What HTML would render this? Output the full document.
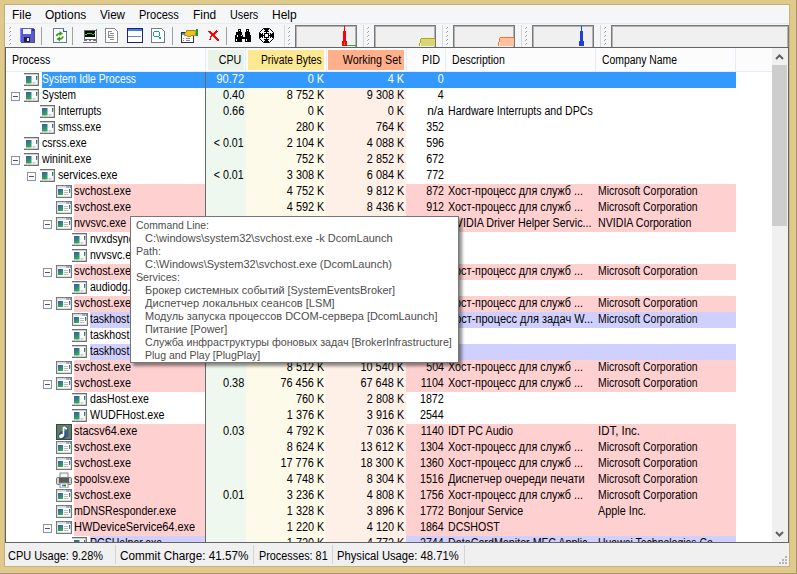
<!DOCTYPE html><html><head><meta charset="utf-8"><style>html,body{margin:0;padding:0;width:797px;height:574px;overflow:hidden;background:#dfc98b}body>div,body>svg{position:absolute}div{position:absolute}.t{white-space:pre;font-family:"Liberation Sans",sans-serif}svg{display:block}</style></head><body><div style="left:0px;top:0px;width:797px;height:574px;background:#dfc98b;"></div>
<div style="left:4px;top:4px;width:786px;height:1px;background:#c4ad76;"></div>
<div style="left:4px;top:4px;width:1px;height:563px;background:#c4ad76;"></div>
<div style="left:789px;top:4px;width:1px;height:563px;background:#c9b27a;"></div>
<div style="left:4px;top:566px;width:786px;height:1px;background:#c9b27a;"></div>
<div style="left:796px;top:0px;width:1px;height:574px;background:#a8966a;"></div>
<div style="left:0px;top:573px;width:797px;height:1px;background:#a8966a;"></div>
<div style="left:5px;top:5px;width:784px;height:18px;background:#f5f6f7;"></div>
<div class="t" style="left:12px;top:6px;font-size:12px;line-height:18px;color:#000;transform:scaleX(1.0);transform-origin:0 0;">File</div>
<div class="t" style="left:45px;top:6px;font-size:12px;line-height:18px;color:#000;transform:scaleX(1.0);transform-origin:0 0;">Options</div>
<div class="t" style="left:100px;top:6px;font-size:12px;line-height:18px;color:#000;transform:scaleX(0.97);transform-origin:0 0;">View</div>
<div class="t" style="left:139px;top:6px;font-size:12px;line-height:18px;color:#000;transform:scaleX(0.92);transform-origin:0 0;">Process</div>
<div class="t" style="left:193px;top:6px;font-size:12px;line-height:18px;color:#000;transform:scaleX(0.99);transform-origin:0 0;">Find</div>
<div class="t" style="left:230px;top:6px;font-size:12px;line-height:18px;color:#000;transform:scaleX(0.9);transform-origin:0 0;">Users</div>
<div class="t" style="left:272px;top:6px;font-size:12px;line-height:18px;color:#000;transform:scaleX(1.0);transform-origin:0 0;">Help</div>
<div style="left:5px;top:23px;width:784px;height:24px;background:#f5f6f7;"></div>
<div style="left:5px;top:23px;width:784px;height:1px;background:#e9ecef;"></div>
<div style="left:10px;top:27px;width:1px;height:1px;background:#9a9a9a;"></div>
<div style="left:9px;top:28px;width:1px;height:1px;background:#b0b0b0;"></div>
<div style="left:10px;top:31px;width:1px;height:1px;background:#9a9a9a;"></div>
<div style="left:9px;top:32px;width:1px;height:1px;background:#b0b0b0;"></div>
<div style="left:10px;top:35px;width:1px;height:1px;background:#9a9a9a;"></div>
<div style="left:9px;top:36px;width:1px;height:1px;background:#b0b0b0;"></div>
<div style="left:10px;top:39px;width:1px;height:1px;background:#9a9a9a;"></div>
<div style="left:9px;top:40px;width:1px;height:1px;background:#b0b0b0;"></div>
<div style="left:10px;top:43px;width:1px;height:1px;background:#9a9a9a;"></div>
<div style="left:9px;top:44px;width:1px;height:1px;background:#b0b0b0;"></div>
<div style="left:10px;top:47px;width:1px;height:1px;background:#9a9a9a;"></div>
<div style="left:9px;top:48px;width:1px;height:1px;background:#b0b0b0;"></div>
<div style="left:289px;top:27px;width:1px;height:1px;background:#9a9a9a;"></div>
<div style="left:288px;top:28px;width:1px;height:1px;background:#b0b0b0;"></div>
<div style="left:289px;top:31px;width:1px;height:1px;background:#9a9a9a;"></div>
<div style="left:288px;top:32px;width:1px;height:1px;background:#b0b0b0;"></div>
<div style="left:289px;top:35px;width:1px;height:1px;background:#9a9a9a;"></div>
<div style="left:288px;top:36px;width:1px;height:1px;background:#b0b0b0;"></div>
<div style="left:289px;top:39px;width:1px;height:1px;background:#9a9a9a;"></div>
<div style="left:288px;top:40px;width:1px;height:1px;background:#b0b0b0;"></div>
<div style="left:289px;top:43px;width:1px;height:1px;background:#9a9a9a;"></div>
<div style="left:288px;top:44px;width:1px;height:1px;background:#b0b0b0;"></div>
<div style="left:289px;top:47px;width:1px;height:1px;background:#9a9a9a;"></div>
<div style="left:288px;top:48px;width:1px;height:1px;background:#b0b0b0;"></div>
<div style="left:368px;top:27px;width:1px;height:1px;background:#9a9a9a;"></div>
<div style="left:367px;top:28px;width:1px;height:1px;background:#b0b0b0;"></div>
<div style="left:368px;top:31px;width:1px;height:1px;background:#9a9a9a;"></div>
<div style="left:367px;top:32px;width:1px;height:1px;background:#b0b0b0;"></div>
<div style="left:368px;top:35px;width:1px;height:1px;background:#9a9a9a;"></div>
<div style="left:367px;top:36px;width:1px;height:1px;background:#b0b0b0;"></div>
<div style="left:368px;top:39px;width:1px;height:1px;background:#9a9a9a;"></div>
<div style="left:367px;top:40px;width:1px;height:1px;background:#b0b0b0;"></div>
<div style="left:368px;top:43px;width:1px;height:1px;background:#9a9a9a;"></div>
<div style="left:367px;top:44px;width:1px;height:1px;background:#b0b0b0;"></div>
<div style="left:368px;top:47px;width:1px;height:1px;background:#9a9a9a;"></div>
<div style="left:367px;top:48px;width:1px;height:1px;background:#b0b0b0;"></div>
<div style="left:447px;top:27px;width:1px;height:1px;background:#9a9a9a;"></div>
<div style="left:446px;top:28px;width:1px;height:1px;background:#b0b0b0;"></div>
<div style="left:447px;top:31px;width:1px;height:1px;background:#9a9a9a;"></div>
<div style="left:446px;top:32px;width:1px;height:1px;background:#b0b0b0;"></div>
<div style="left:447px;top:35px;width:1px;height:1px;background:#9a9a9a;"></div>
<div style="left:446px;top:36px;width:1px;height:1px;background:#b0b0b0;"></div>
<div style="left:447px;top:39px;width:1px;height:1px;background:#9a9a9a;"></div>
<div style="left:446px;top:40px;width:1px;height:1px;background:#b0b0b0;"></div>
<div style="left:447px;top:43px;width:1px;height:1px;background:#9a9a9a;"></div>
<div style="left:446px;top:44px;width:1px;height:1px;background:#b0b0b0;"></div>
<div style="left:447px;top:47px;width:1px;height:1px;background:#9a9a9a;"></div>
<div style="left:446px;top:48px;width:1px;height:1px;background:#b0b0b0;"></div>
<div style="left:526px;top:27px;width:1px;height:1px;background:#9a9a9a;"></div>
<div style="left:525px;top:28px;width:1px;height:1px;background:#b0b0b0;"></div>
<div style="left:526px;top:31px;width:1px;height:1px;background:#9a9a9a;"></div>
<div style="left:525px;top:32px;width:1px;height:1px;background:#b0b0b0;"></div>
<div style="left:526px;top:35px;width:1px;height:1px;background:#9a9a9a;"></div>
<div style="left:525px;top:36px;width:1px;height:1px;background:#b0b0b0;"></div>
<div style="left:526px;top:39px;width:1px;height:1px;background:#9a9a9a;"></div>
<div style="left:525px;top:40px;width:1px;height:1px;background:#b0b0b0;"></div>
<div style="left:526px;top:43px;width:1px;height:1px;background:#9a9a9a;"></div>
<div style="left:525px;top:44px;width:1px;height:1px;background:#b0b0b0;"></div>
<div style="left:526px;top:47px;width:1px;height:1px;background:#9a9a9a;"></div>
<div style="left:525px;top:48px;width:1px;height:1px;background:#b0b0b0;"></div>
<div style="left:605px;top:27px;width:1px;height:1px;background:#9a9a9a;"></div>
<div style="left:604px;top:28px;width:1px;height:1px;background:#b0b0b0;"></div>
<div style="left:605px;top:31px;width:1px;height:1px;background:#9a9a9a;"></div>
<div style="left:604px;top:32px;width:1px;height:1px;background:#b0b0b0;"></div>
<div style="left:605px;top:35px;width:1px;height:1px;background:#9a9a9a;"></div>
<div style="left:604px;top:36px;width:1px;height:1px;background:#b0b0b0;"></div>
<div style="left:605px;top:39px;width:1px;height:1px;background:#9a9a9a;"></div>
<div style="left:604px;top:40px;width:1px;height:1px;background:#b0b0b0;"></div>
<div style="left:605px;top:43px;width:1px;height:1px;background:#9a9a9a;"></div>
<div style="left:604px;top:44px;width:1px;height:1px;background:#b0b0b0;"></div>
<div style="left:605px;top:47px;width:1px;height:1px;background:#9a9a9a;"></div>
<div style="left:604px;top:48px;width:1px;height:1px;background:#b0b0b0;"></div>
<div style="left:284px;top:25px;width:1px;height:22px;background:#d9d9d9;"></div>
<div style="left:363px;top:25px;width:1px;height:22px;background:#d9d9d9;"></div>
<div style="left:442px;top:25px;width:1px;height:22px;background:#d9d9d9;"></div>
<div style="left:521px;top:25px;width:1px;height:22px;background:#d9d9d9;"></div>
<div style="left:600px;top:25px;width:1px;height:22px;background:#d9d9d9;"></div>
<div style="left:41px;top:27px;width:1px;height:18px;background:#a0a0a0;"></div>
<div style="left:72px;top:27px;width:1px;height:18px;background:#a0a0a0;"></div>
<div style="left:172px;top:27px;width:1px;height:18px;background:#a0a0a0;"></div>
<div style="left:226px;top:27px;width:1px;height:18px;background:#a0a0a0;"></div>
<div style="left:295px;top:25px;width:62px;height:22px;background:#f0f0f0;box-sizing:border-box;border:1px solid #777;border-bottom:none;box-shadow:inset 1px 1px 0 #b4b4b4, inset -1px 0 0 #b4b4b4"></div>
<div style="left:374px;top:25px;width:62px;height:22px;background:#f0f0f0;box-sizing:border-box;border:1px solid #777;border-bottom:none;box-shadow:inset 1px 1px 0 #b4b4b4, inset -1px 0 0 #b4b4b4"></div>
<div style="left:453px;top:25px;width:62px;height:22px;background:#f0f0f0;box-sizing:border-box;border:1px solid #777;border-bottom:none;box-shadow:inset 1px 1px 0 #b4b4b4, inset -1px 0 0 #b4b4b4"></div>
<div style="left:532px;top:25px;width:62px;height:22px;background:#f0f0f0;box-sizing:border-box;border:1px solid #777;border-bottom:none;box-shadow:inset 1px 1px 0 #b4b4b4, inset -1px 0 0 #b4b4b4"></div>
<div style="left:611px;top:25px;width:178px;height:22px;background:#f0f0f0;box-sizing:border-box;border:1px solid #777;border-bottom:none;box-shadow:inset 1px 1px 0 #b4b4b4, inset -1px 0 0 #b4b4b4"></div>
<svg style="position:absolute;left:0;top:0" width="797" height="60" shape-rendering="crispEdges"><rect x="342" y="41" width="5" height="5" fill="#f4b0b0"/><rect x="344" y="26" width="1" height="20" fill="#ff0000"/><rect x="343" y="31" width="1" height="15" fill="#ff0000"/><rect x="345" y="31" width="1" height="15" fill="#ff0000"/><rect x="342" y="41" width="1" height="5" fill="#ff0000"/><rect x="346" y="41" width="1" height="5" fill="#ff0000"/><rect x="344" y="42" width="1" height="3" fill="#40a040"/><rect x="347" y="45" width="9" height="1" fill="#40a040"/><rect x="421" y="39" width="14" height="7" fill="#d8d47a"/><rect x="421" y="38" width="14" height="1" fill="#b4a800"/><rect x="420" y="39" width="1" height="4" fill="#b4a800"/><rect x="419" y="43" width="1" height="3" fill="#b4a800"/><rect x="500" y="38" width="14" height="8" fill="#ffc0a0"/><rect x="500" y="37" width="14" height="1" fill="#ff7028"/><rect x="499" y="38" width="1" height="4" fill="#ff7028"/><rect x="498" y="42" width="1" height="4" fill="#ff7028"/><rect x="579" y="41" width="5" height="5" fill="#b8c4f0"/><rect x="581" y="26" width="1" height="20" fill="#2040d0"/><rect x="580" y="31" width="1" height="15" fill="#2040d0"/><rect x="582" y="31" width="1" height="15" fill="#2040d0"/><rect x="579" y="41" width="1" height="5" fill="#2040d0"/><rect x="583" y="41" width="1" height="5" fill="#2040d0"/></svg>
<svg style="position:absolute;left:0;top:0" width="300" height="48" shape-rendering="crispEdges"><rect x="21" y="29" width="14" height="14" fill="#555"/><rect x="20" y="28" width="14" height="14" fill="#5a5ad8"/><rect x="20" y="28" width="1" height="14" fill="#8a8aff"/><rect x="23" y="29" width="8" height="5" fill="#f4f4f4"/><rect x="24" y="37" width="6" height="5" fill="#202050"/><rect x="27" y="38" width="2" height="3" fill="#e8e8ff"/><rect x="32" y="29" width="2" height="2" fill="#303090"/><path d="M53.5 28.5 H63.5 L66.5 31.5 V42.5 H53.5 Z" fill="#fafafa" stroke="#6a7a9a" stroke-width="1"/><path d="M63.5 28.5 V31.5 H66.5" fill="#cfe" stroke="#4a5a9a" stroke-width="1"/><path d="M56.5 36 Q57 33.5 60.5 33.5" fill="none" stroke="#3a9a10" stroke-width="1.6" shape-rendering="auto"/><path d="M59.5 31 L63 33.5 L59.5 36 Z" fill="#3a9a10" shape-rendering="auto"/><path d="M63 36.5 Q62.5 39 59 39" fill="none" stroke="#3a9a10" stroke-width="1.6" shape-rendering="auto"/><path d="M60 36.5 L56.5 39 L60 41.5 Z" fill="#3a9a10" shape-rendering="auto"/><rect x="84" y="30" width="12" height="9" fill="#fff" stroke="#6a6a6a" stroke-width="1"/><rect x="85" y="31" width="10" height="6" fill="#000"/><path d="M85 35 L87 34 L88 33 H91 L92 34 H94 L95 33" fill="none" stroke="#00ee00" stroke-width="1"/><rect x="84" y="40" width="3" height="1" fill="#777"/><rect x="89" y="40" width="2" height="1" fill="#777"/><rect x="93" y="40" width="3" height="1" fill="#777"/><rect x="83" y="42" width="14" height="1" fill="#777"/><rect x="96" y="29" width="1" height="14" fill="#777"/><path d="M105.5 28.5 H114.5 L117.5 31.5 V42.5 H105.5 Z" fill="#fff" stroke="#8a8a8a" stroke-width="1"/><rect x="108" y="31" width="1" height="7" fill="#8a8a8a"/><rect x="108" y="31" width="4" height="1" fill="#8a8a8a"/><rect x="110" y="33" width="4" height="1" fill="#8a8a8a"/><rect x="109" y="35" width="5" height="1" fill="#8a8a8a"/><rect x="109" y="37" width="5" height="1" fill="#8a8a8a"/><rect x="110" y="39" width="4" height="1" fill="#8a8a8a"/><rect x="127.5" y="28.5" width="15" height="14" fill="#fff" stroke="#22226a" stroke-width="1"/><rect x="128" y="29" width="14" height="2" fill="#3f7fe8"/><rect x="128" y="36" width="13" height="1" fill="#5a8ad0"/><path d="M151.5 28.5 H161.5 L164.5 31.5 V42.5 H151.5 Z" fill="#fff" stroke="#7a7a7a" stroke-width="1"/><circle cx="156.5" cy="34" r="3" fill="none" stroke="#10a0a0" stroke-width="1"/><path d="M159 37 L161 39 M161 37 L159 39" stroke="#10a0a0" stroke-width="1"/><rect x="181.5" y="32.5" width="12" height="10" fill="#fff" stroke="#333" stroke-width="1"/><rect x="182" y="33" width="6" height="2" fill="#4a8ae0"/><rect x="183" y="38" width="1" height="1" fill="#88a"/><rect x="186" y="38" width="4" height="1" fill="#88a"/><rect x="183" y="40" width="1" height="1" fill="#88a"/><rect x="186" y="40" width="4" height="1" fill="#88a"/><path d="M184 35 L187 30 H195 L196 35 L191 36 L189 37 Z" fill="#f0c020" stroke="#806000" stroke-width="0.6"/><rect x="196" y="29" width="2" height="7" fill="#20a020"/><path d="M208 31 L210 31 L213 34 L216 30 L218 31 L214 35 L220 40 L217 41 L212 36 L210 41 L209 40 L211 35 Z" fill="#ff0000"/><path d="M238 29 H241 V32 H242 V35 H243 V37 H244 V35 H245 V32 H246 V29 H249 V32 H250 V35 H251 V42 H245 V39 H242 V42 H235 V35 H236 V32 H238 Z" fill="#000"/><rect x="239" y="30" width="1" height="1" fill="#fff"/><rect x="247" y="30" width="1" height="1" fill="#fff"/><rect x="237" y="35" width="1" height="2" fill="#fff"/><rect x="241" y="35" width="1" height="1" fill="#fff"/><rect x="244" y="35" width="1" height="2" fill="#fff"/><rect x="236" y="39" width="1" height="2" fill="#fff"/><rect x="246" y="39" width="1" height="2" fill="#fff"/><polygon points="263.5,28.5 269.5,28.5 273.5,32.5 273.5,38.5 269.5,42.5 263.5,42.5 259.5,38.5 259.5,32.5" fill="none" stroke="#000" stroke-width="1" shape-rendering="auto"/><rect x="264" y="28" width="5" height="2" fill="#000"/><rect x="265" y="30" width="3" height="1" fill="#000"/><rect x="266" y="30" width="1" height="4" fill="#000"/><rect x="264" y="31" width="5" height="1" fill="#000"/><rect x="264" y="41" width="5" height="2" fill="#000"/><rect x="265" y="40" width="3" height="1" fill="#000"/><rect x="266" y="37" width="1" height="4" fill="#000"/><rect x="264" y="39" width="5" height="1" fill="#000"/><rect x="259" y="33" width="2" height="5" fill="#000"/><rect x="261" y="34" width="1" height="3" fill="#000"/><rect x="261" y="35" width="4" height="1" fill="#000"/><rect x="262" y="33" width="1" height="5" fill="#000"/><rect x="272" y="33" width="2" height="5" fill="#000"/><rect x="271" y="34" width="1" height="3" fill="#000"/><rect x="268" y="35" width="4" height="1" fill="#000"/><rect x="270" y="33" width="1" height="5" fill="#000"/><rect x="264" y="33" width="5" height="5" fill="#000"/><rect x="265" y="34" width="3" height="3" fill="#fff"/></svg>
<div style="left:5px;top:47px;width:784px;height:496px;background:#ffffff;box-sizing:border-box;border:1px solid #646464"></div>
<div style="left:6px;top:48px;width:766px;height:24px;background:#fcfcfc;"></div>
<div style="left:6px;top:71px;width:766px;height:1px;background:#e4ecf5;"></div>
<div style="left:205px;top:48px;width:1px;height:23px;background:#e4ecf5;"></div>
<div style="left:245px;top:48px;width:1px;height:23px;background:#e4ecf5;"></div>
<div style="left:326px;top:48px;width:1px;height:23px;background:#e4ecf5;"></div>
<div style="left:406px;top:48px;width:1px;height:23px;background:#e4ecf5;"></div>
<div style="left:445px;top:48px;width:1px;height:23px;background:#e4ecf5;"></div>
<div style="left:595px;top:48px;width:1px;height:23px;background:#e4ecf5;"></div>
<div style="left:735px;top:48px;width:1px;height:23px;background:#e4ecf5;"></div>
<div style="left:208px;top:50px;width:36px;height:20px;background:#e9f3e7;"></div>
<div style="left:248px;top:50px;width:76px;height:20px;background:#fee891;"></div>
<div style="left:328px;top:50px;width:76px;height:20px;background:#ffaf8a;"></div>
<div class="t" style="left:12px;top:50px;font-size:12px;line-height:20px;color:#000;transform:scaleX(0.883);transform-origin:0 0;">Process</div>
<div class="t" style="right:556px;top:50px;font-size:12px;line-height:20px;color:#000;transform:scaleX(0.892);transform-origin:100% 0;">CPU</div>
<div class="t" style="right:475px;top:50px;font-size:12px;line-height:20px;color:#000;transform:scaleX(0.86);transform-origin:100% 0;">Private Bytes</div>
<div class="t" style="right:396px;top:50px;font-size:12px;line-height:20px;color:#000;transform:scaleX(0.895);transform-origin:100% 0;">Working Set</div>
<div class="t" style="right:357px;top:50px;font-size:12px;line-height:20px;color:#000;transform:scaleX(0.9);transform-origin:100% 0;">PID</div>
<div class="t" style="left:452px;top:50px;font-size:12px;line-height:20px;color:#000;transform:scaleX(0.88);transform-origin:0 0;">Description</div>
<div class="t" style="left:602px;top:50px;font-size:12px;line-height:20px;color:#000;transform:scaleX(0.865);transform-origin:0 0;">Company Name</div>
<div style="left:772px;top:48px;width:16px;height:494px;background:#f0f0f0;"></div>
<div style="left:772px;top:65px;width:15px;height:161px;background:#cdcdcd;"></div>
<svg style="position:absolute;left:772px;top:48px" width="16" height="17"><polyline points="4,11 7.5,7.5 11,11" fill="none" stroke="#606060" stroke-width="2"/></svg>
<svg style="position:absolute;left:772px;top:526px" width="16" height="16"><polyline points="4,6 7.5,9.5 11,6" fill="none" stroke="#606060" stroke-width="2"/></svg>
<div style="left:206px;top:72px;width:40px;height:16px;background:#eef8ee;"></div>
<div style="left:246px;top:72px;width:80px;height:16px;background:#fefae9;"></div>
<div style="left:326px;top:72px;width:80px;height:16px;background:#feefe7;"></div>
<div style="left:42px;top:72px;width:694px;height:16px;background:#3399ff;"></div>
<div style="left:24px;top:73px;width:16px;height:15px;overflow:hidden"><svg width="15" height="13" viewBox="0 0 15 13"><defs><linearGradient id="ga" x1="0" y1="0" x2="0.3" y2="1"><stop offset="0" stop-color="#2f5fa8"/><stop offset="1" stop-color="#3aa35a"/></linearGradient><linearGradient id="gb" x1="0" y1="0" x2="0" y2="1"><stop offset="0" stop-color="#2f5fa8"/><stop offset="1" stop-color="#3aa35a"/></linearGradient></defs><rect x="0" y="0" width="15" height="13" fill="#fbfbfb"/><rect x="0" y="0" width="15" height="1.3" fill="#6e6e6e"/><rect x="0" y="11.7" width="15" height="1.3" fill="#6e6e6e"/><rect x="13.7" y="0" width="1.3" height="13" fill="#777"/><rect x="2" y="3" width="5.5" height="7.5" fill="url(#ga)"/><rect x="12" y="3" width="1.2" height="4" fill="url(#gb)"/><rect x="8.5" y="9" width="3" height="1.5" fill="#c8c8c8"/></svg></div>
<div class="t" style="left:42px;top:70.5px;font-size:12px;line-height:16px;color:#fff;transform:scaleX(0.8589166666666667);transform-origin:0 0;">System Idle Process</div>
<div class="t" style="right:553px;top:70.5px;font-size:12px;line-height:16px;color:#fff;transform:scaleX(0.9166666666666666);transform-origin:100% 0;">90.72</div>
<div class="t" style="right:473px;top:70.5px;font-size:12px;line-height:16px;color:#fff;transform:scaleX(0.9075);transform-origin:100% 0;">0 K</div>
<div class="t" style="right:393px;top:70.5px;font-size:12px;line-height:16px;color:#fff;transform:scaleX(0.9075);transform-origin:100% 0;">4 K</div>
<div class="t" style="right:353px;top:70.5px;font-size:12px;line-height:16px;color:#fff;transform:scaleX(0.8891666666666667);transform-origin:100% 0;">0</div>
<div style="left:206px;top:88px;width:40px;height:16px;background:#eef8ee;"></div>
<div style="left:246px;top:88px;width:80px;height:16px;background:#fefae9;"></div>
<div style="left:326px;top:88px;width:80px;height:16px;background:#feefe7;"></div>
<div style="left:24px;top:89px;width:16px;height:15px;overflow:hidden"><svg width="15" height="13" viewBox="0 0 15 13"><defs><linearGradient id="ga" x1="0" y1="0" x2="0.3" y2="1"><stop offset="0" stop-color="#2f5fa8"/><stop offset="1" stop-color="#3aa35a"/></linearGradient><linearGradient id="gb" x1="0" y1="0" x2="0" y2="1"><stop offset="0" stop-color="#2f5fa8"/><stop offset="1" stop-color="#3aa35a"/></linearGradient></defs><rect x="0" y="0" width="15" height="13" fill="#fbfbfb"/><rect x="0" y="0" width="15" height="1.3" fill="#6e6e6e"/><rect x="0" y="11.7" width="15" height="1.3" fill="#6e6e6e"/><rect x="13.7" y="0" width="1.3" height="13" fill="#777"/><rect x="2" y="3" width="5.5" height="7.5" fill="url(#ga)"/><rect x="12" y="3" width="1.2" height="4" fill="url(#gb)"/><rect x="8.5" y="9" width="3" height="1.5" fill="#c8c8c8"/></svg></div>
<div style="left:11px;top:92px;width:9px;height:9px"><svg width="9" height="9" viewBox="0 0 9 9"><rect x="0.5" y="0.5" width="8" height="8" fill="#fff" stroke="#919191" stroke-width="1"/><rect x="2" y="4" width="5" height="1" fill="#3a5a9a"/></svg></div>
<div class="t" style="left:42px;top:86.5px;font-size:12px;line-height:16px;color:#000;transform:scaleX(0.84975);transform-origin:0 0;">System</div>
<div class="t" style="right:553px;top:86.5px;font-size:12px;line-height:16px;color:#000;transform:scaleX(0.9166666666666666);transform-origin:100% 0;">0.40</div>
<div class="t" style="right:473px;top:86.5px;font-size:12px;line-height:16px;color:#000;transform:scaleX(0.9075);transform-origin:100% 0;">8 752 K</div>
<div class="t" style="right:393px;top:86.5px;font-size:12px;line-height:16px;color:#000;transform:scaleX(0.9075);transform-origin:100% 0;">9 308 K</div>
<div class="t" style="right:353px;top:86.5px;font-size:12px;line-height:16px;color:#000;transform:scaleX(0.8891666666666667);transform-origin:100% 0;">4</div>
<div style="left:206px;top:104px;width:40px;height:16px;background:#eef8ee;"></div>
<div style="left:246px;top:104px;width:80px;height:16px;background:#fefae9;"></div>
<div style="left:326px;top:104px;width:80px;height:16px;background:#feefe7;"></div>
<div style="left:40px;top:105px;width:16px;height:15px;overflow:hidden"><svg width="15" height="13" viewBox="0 0 15 13"><defs><linearGradient id="ga" x1="0" y1="0" x2="0.3" y2="1"><stop offset="0" stop-color="#2f5fa8"/><stop offset="1" stop-color="#3aa35a"/></linearGradient><linearGradient id="gb" x1="0" y1="0" x2="0" y2="1"><stop offset="0" stop-color="#2f5fa8"/><stop offset="1" stop-color="#3aa35a"/></linearGradient></defs><rect x="0" y="0" width="15" height="13" fill="#fbfbfb"/><rect x="0" y="0" width="15" height="1.3" fill="#6e6e6e"/><rect x="0" y="11.7" width="15" height="1.3" fill="#6e6e6e"/><rect x="13.7" y="0" width="1.3" height="13" fill="#777"/><rect x="2" y="3" width="5.5" height="7.5" fill="url(#ga)"/><rect x="12" y="3" width="1.2" height="4" fill="url(#gb)"/><rect x="8.5" y="9" width="3" height="1.5" fill="#c8c8c8"/></svg></div>
<div class="t" style="left:58px;top:102.5px;font-size:12px;line-height:16px;color:#000;transform:scaleX(0.858);transform-origin:0 0;">Interrupts</div>
<div class="t" style="right:553px;top:102.5px;font-size:12px;line-height:16px;color:#000;transform:scaleX(0.9166666666666666);transform-origin:100% 0;">0.66</div>
<div class="t" style="right:473px;top:102.5px;font-size:12px;line-height:16px;color:#000;transform:scaleX(0.9075);transform-origin:100% 0;">0 K</div>
<div class="t" style="right:393px;top:102.5px;font-size:12px;line-height:16px;color:#000;transform:scaleX(0.9075);transform-origin:100% 0;">0 K</div>
<div class="t" style="right:353px;top:102.5px;font-size:12px;line-height:16px;color:#000;transform:scaleX(0.99);transform-origin:100% 0;">n/a</div>
<div class="t" style="left:448px;top:102.5px;font-size:12px;line-height:16px;color:#000;transform:scaleX(0.8818333333333332);transform-origin:0 0;">Hardware Interrupts and DPCs</div>
<div style="left:206px;top:120px;width:40px;height:16px;background:#eef8ee;"></div>
<div style="left:246px;top:120px;width:80px;height:16px;background:#fefae9;"></div>
<div style="left:326px;top:120px;width:80px;height:16px;background:#feefe7;"></div>
<div style="left:40px;top:121px;width:16px;height:15px;overflow:hidden"><svg width="15" height="13" viewBox="0 0 15 13"><defs><linearGradient id="ga" x1="0" y1="0" x2="0.3" y2="1"><stop offset="0" stop-color="#2f5fa8"/><stop offset="1" stop-color="#3aa35a"/></linearGradient><linearGradient id="gb" x1="0" y1="0" x2="0" y2="1"><stop offset="0" stop-color="#2f5fa8"/><stop offset="1" stop-color="#3aa35a"/></linearGradient></defs><rect x="0" y="0" width="15" height="13" fill="#fbfbfb"/><rect x="0" y="0" width="15" height="1.3" fill="#6e6e6e"/><rect x="0" y="11.7" width="15" height="1.3" fill="#6e6e6e"/><rect x="13.7" y="0" width="1.3" height="13" fill="#777"/><rect x="2" y="3" width="5.5" height="7.5" fill="url(#ga)"/><rect x="12" y="3" width="1.2" height="4" fill="url(#gb)"/><rect x="8.5" y="9" width="3" height="1.5" fill="#c8c8c8"/></svg></div>
<div class="t" style="left:58px;top:118.5px;font-size:12px;line-height:16px;color:#000;transform:scaleX(0.84975);transform-origin:0 0;">smss.exe</div>
<div class="t" style="right:473px;top:118.5px;font-size:12px;line-height:16px;color:#000;transform:scaleX(0.9075);transform-origin:100% 0;">280 K</div>
<div class="t" style="right:393px;top:118.5px;font-size:12px;line-height:16px;color:#000;transform:scaleX(0.9075);transform-origin:100% 0;">764 K</div>
<div class="t" style="right:353px;top:118.5px;font-size:12px;line-height:16px;color:#000;transform:scaleX(0.8891666666666667);transform-origin:100% 0;">352</div>
<div style="left:206px;top:136px;width:40px;height:16px;background:#eef8ee;"></div>
<div style="left:246px;top:136px;width:80px;height:16px;background:#fefae9;"></div>
<div style="left:326px;top:136px;width:80px;height:16px;background:#feefe7;"></div>
<div style="left:24px;top:137px;width:16px;height:15px;overflow:hidden"><svg width="15" height="13" viewBox="0 0 15 13"><defs><linearGradient id="ga" x1="0" y1="0" x2="0.3" y2="1"><stop offset="0" stop-color="#2f5fa8"/><stop offset="1" stop-color="#3aa35a"/></linearGradient><linearGradient id="gb" x1="0" y1="0" x2="0" y2="1"><stop offset="0" stop-color="#2f5fa8"/><stop offset="1" stop-color="#3aa35a"/></linearGradient></defs><rect x="0" y="0" width="15" height="13" fill="#fbfbfb"/><rect x="0" y="0" width="15" height="1.3" fill="#6e6e6e"/><rect x="0" y="11.7" width="15" height="1.3" fill="#6e6e6e"/><rect x="13.7" y="0" width="1.3" height="13" fill="#777"/><rect x="2" y="3" width="5.5" height="7.5" fill="url(#ga)"/><rect x="12" y="3" width="1.2" height="4" fill="url(#gb)"/><rect x="8.5" y="9" width="3" height="1.5" fill="#c8c8c8"/></svg></div>
<div class="t" style="left:42px;top:134.5px;font-size:12px;line-height:16px;color:#000;transform:scaleX(0.8799999999999999);transform-origin:0 0;">csrss.exe</div>
<div class="t" style="right:553px;top:134.5px;font-size:12px;line-height:16px;color:#000;transform:scaleX(0.8891666666666667);transform-origin:100% 0;">&lt; 0.01</div>
<div class="t" style="right:473px;top:134.5px;font-size:12px;line-height:16px;color:#000;transform:scaleX(0.9075);transform-origin:100% 0;">2 104 K</div>
<div class="t" style="right:393px;top:134.5px;font-size:12px;line-height:16px;color:#000;transform:scaleX(0.9075);transform-origin:100% 0;">4 088 K</div>
<div class="t" style="right:353px;top:134.5px;font-size:12px;line-height:16px;color:#000;transform:scaleX(0.8891666666666667);transform-origin:100% 0;">596</div>
<div style="left:206px;top:152px;width:40px;height:16px;background:#eef8ee;"></div>
<div style="left:246px;top:152px;width:80px;height:16px;background:#fefae9;"></div>
<div style="left:326px;top:152px;width:80px;height:16px;background:#feefe7;"></div>
<div style="left:24px;top:153px;width:16px;height:15px;overflow:hidden"><svg width="15" height="13" viewBox="0 0 15 13"><defs><linearGradient id="ga" x1="0" y1="0" x2="0.3" y2="1"><stop offset="0" stop-color="#2f5fa8"/><stop offset="1" stop-color="#3aa35a"/></linearGradient><linearGradient id="gb" x1="0" y1="0" x2="0" y2="1"><stop offset="0" stop-color="#2f5fa8"/><stop offset="1" stop-color="#3aa35a"/></linearGradient></defs><rect x="0" y="0" width="15" height="13" fill="#fbfbfb"/><rect x="0" y="0" width="15" height="1.3" fill="#6e6e6e"/><rect x="0" y="11.7" width="15" height="1.3" fill="#6e6e6e"/><rect x="13.7" y="0" width="1.3" height="13" fill="#777"/><rect x="2" y="3" width="5.5" height="7.5" fill="url(#ga)"/><rect x="12" y="3" width="1.2" height="4" fill="url(#gb)"/><rect x="8.5" y="9" width="3" height="1.5" fill="#c8c8c8"/></svg></div>
<div style="left:11px;top:156px;width:9px;height:9px"><svg width="9" height="9" viewBox="0 0 9 9"><rect x="0.5" y="0.5" width="8" height="8" fill="#fff" stroke="#919191" stroke-width="1"/><rect x="2" y="4" width="5" height="1" fill="#3a5a9a"/></svg></div>
<div class="t" style="left:42px;top:150.5px;font-size:12px;line-height:16px;color:#000;transform:scaleX(0.8818333333333332);transform-origin:0 0;">wininit.exe</div>
<div class="t" style="right:473px;top:150.5px;font-size:12px;line-height:16px;color:#000;transform:scaleX(0.9075);transform-origin:100% 0;">752 K</div>
<div class="t" style="right:393px;top:150.5px;font-size:12px;line-height:16px;color:#000;transform:scaleX(0.9075);transform-origin:100% 0;">2 852 K</div>
<div class="t" style="right:353px;top:150.5px;font-size:12px;line-height:16px;color:#000;transform:scaleX(0.8891666666666667);transform-origin:100% 0;">672</div>
<div style="left:206px;top:168px;width:40px;height:16px;background:#eef8ee;"></div>
<div style="left:246px;top:168px;width:80px;height:16px;background:#fefae9;"></div>
<div style="left:326px;top:168px;width:80px;height:16px;background:#feefe7;"></div>
<div style="left:40px;top:169px;width:16px;height:15px;overflow:hidden"><svg width="15" height="13" viewBox="0 0 15 13"><defs><linearGradient id="ga" x1="0" y1="0" x2="0.3" y2="1"><stop offset="0" stop-color="#2f5fa8"/><stop offset="1" stop-color="#3aa35a"/></linearGradient><linearGradient id="gb" x1="0" y1="0" x2="0" y2="1"><stop offset="0" stop-color="#2f5fa8"/><stop offset="1" stop-color="#3aa35a"/></linearGradient></defs><rect x="0" y="0" width="15" height="13" fill="#fbfbfb"/><rect x="0" y="0" width="15" height="1.3" fill="#6e6e6e"/><rect x="0" y="11.7" width="15" height="1.3" fill="#6e6e6e"/><rect x="13.7" y="0" width="1.3" height="13" fill="#777"/><rect x="2" y="3" width="5.5" height="7.5" fill="url(#ga)"/><rect x="12" y="3" width="1.2" height="4" fill="url(#gb)"/><rect x="8.5" y="9" width="3" height="1.5" fill="#c8c8c8"/></svg></div>
<div style="left:27px;top:172px;width:9px;height:9px"><svg width="9" height="9" viewBox="0 0 9 9"><rect x="0.5" y="0.5" width="8" height="8" fill="#fff" stroke="#919191" stroke-width="1"/><rect x="2" y="4" width="5" height="1" fill="#3a5a9a"/></svg></div>
<div class="t" style="left:58px;top:166.5px;font-size:12px;line-height:16px;color:#000;transform:scaleX(0.8919166666666666);transform-origin:0 0;">services.exe</div>
<div class="t" style="right:553px;top:166.5px;font-size:12px;line-height:16px;color:#000;transform:scaleX(0.8891666666666667);transform-origin:100% 0;">&lt; 0.01</div>
<div class="t" style="right:473px;top:166.5px;font-size:12px;line-height:16px;color:#000;transform:scaleX(0.9075);transform-origin:100% 0;">3 308 K</div>
<div class="t" style="right:393px;top:166.5px;font-size:12px;line-height:16px;color:#000;transform:scaleX(0.9075);transform-origin:100% 0;">6 084 K</div>
<div class="t" style="right:353px;top:166.5px;font-size:12px;line-height:16px;color:#000;transform:scaleX(0.8891666666666667);transform-origin:100% 0;">772</div>
<div style="left:206px;top:184px;width:40px;height:16px;background:#eef8ee;"></div>
<div style="left:246px;top:184px;width:80px;height:16px;background:#fefae9;"></div>
<div style="left:326px;top:184px;width:80px;height:16px;background:#feefe7;"></div>
<div style="left:74px;top:184px;width:131px;height:16px;background:#ffd0d0;"></div>
<div style="left:406px;top:184px;width:330px;height:16px;background:#ffd0d0;"></div>
<div style="left:56px;top:185px;width:16px;height:15px;overflow:hidden"><svg width="16" height="13" viewBox="0 0 16 13"><rect x="0.6" y="0.6" width="14.8" height="11.8" fill="#fdfdfd" stroke="#7a7a7a" stroke-width="1.2"/><rect x="1.2" y="1.2" width="13.6" height="1.6" fill="#d5dce8"/><rect x="10.5" y="1.2" width="1" height="1.4" fill="#3b5f9a"/><rect x="12.3" y="1.2" width="1" height="1.4" fill="#3b5f9a"/><rect x="14" y="1.2" width="0.9" height="1.4" fill="#3b5f9a"/><rect x="2" y="4" width="5" height="6" fill="url(#ga)"/><rect x="8" y="5" width="4" height="1" fill="#bbb"/><rect x="8" y="7" width="4" height="1" fill="#bbb"/><rect x="8" y="9" width="4" height="1" fill="#bbb"/><rect x="13" y="4" width="1.2" height="4" fill="url(#gb)"/></svg></div>
<div class="t" style="left:74px;top:182.5px;font-size:12px;line-height:16px;color:#000;transform:scaleX(0.89925);transform-origin:0 0;">svchost.exe</div>
<div class="t" style="right:473px;top:182.5px;font-size:12px;line-height:16px;color:#000;transform:scaleX(0.9075);transform-origin:100% 0;">4 752 K</div>
<div class="t" style="right:393px;top:182.5px;font-size:12px;line-height:16px;color:#000;transform:scaleX(0.9075);transform-origin:100% 0;">9 812 K</div>
<div class="t" style="right:353px;top:182.5px;font-size:12px;line-height:16px;color:#000;transform:scaleX(0.8891666666666667);transform-origin:100% 0;">872</div>
<div class="t" style="left:448px;top:182.5px;font-size:12px;line-height:16px;color:#000;transform:scaleX(0.9001666666666667);transform-origin:0 0;">Хост-процесс для служб ...</div>
<div class="t" style="left:598px;top:182.5px;font-size:12px;line-height:16px;color:#000;transform:scaleX(0.8671666666666666);transform-origin:0 0;">Microsoft Corporation</div>
<div style="left:206px;top:200px;width:40px;height:16px;background:#eef8ee;"></div>
<div style="left:246px;top:200px;width:80px;height:16px;background:#fefae9;"></div>
<div style="left:326px;top:200px;width:80px;height:16px;background:#feefe7;"></div>
<div style="left:74px;top:200px;width:131px;height:16px;background:#ffd0d0;"></div>
<div style="left:406px;top:200px;width:330px;height:16px;background:#ffd0d0;"></div>
<div style="left:56px;top:201px;width:16px;height:15px;overflow:hidden"><svg width="16" height="13" viewBox="0 0 16 13"><rect x="0.6" y="0.6" width="14.8" height="11.8" fill="#fdfdfd" stroke="#7a7a7a" stroke-width="1.2"/><rect x="1.2" y="1.2" width="13.6" height="1.6" fill="#d5dce8"/><rect x="10.5" y="1.2" width="1" height="1.4" fill="#3b5f9a"/><rect x="12.3" y="1.2" width="1" height="1.4" fill="#3b5f9a"/><rect x="14" y="1.2" width="0.9" height="1.4" fill="#3b5f9a"/><rect x="2" y="4" width="5" height="6" fill="url(#ga)"/><rect x="8" y="5" width="4" height="1" fill="#bbb"/><rect x="8" y="7" width="4" height="1" fill="#bbb"/><rect x="8" y="9" width="4" height="1" fill="#bbb"/><rect x="13" y="4" width="1.2" height="4" fill="url(#gb)"/></svg></div>
<div class="t" style="left:74px;top:198.5px;font-size:12px;line-height:16px;color:#000;transform:scaleX(0.89925);transform-origin:0 0;">svchost.exe</div>
<div class="t" style="right:473px;top:198.5px;font-size:12px;line-height:16px;color:#000;transform:scaleX(0.9075);transform-origin:100% 0;">4 592 K</div>
<div class="t" style="right:393px;top:198.5px;font-size:12px;line-height:16px;color:#000;transform:scaleX(0.9075);transform-origin:100% 0;">8 436 K</div>
<div class="t" style="right:353px;top:198.5px;font-size:12px;line-height:16px;color:#000;transform:scaleX(0.8891666666666667);transform-origin:100% 0;">912</div>
<div class="t" style="left:448px;top:198.5px;font-size:12px;line-height:16px;color:#000;transform:scaleX(0.9001666666666667);transform-origin:0 0;">Хост-процесс для служб ...</div>
<div class="t" style="left:598px;top:198.5px;font-size:12px;line-height:16px;color:#000;transform:scaleX(0.8671666666666666);transform-origin:0 0;">Microsoft Corporation</div>
<div style="left:206px;top:216px;width:40px;height:16px;background:#eef8ee;"></div>
<div style="left:246px;top:216px;width:80px;height:16px;background:#fefae9;"></div>
<div style="left:326px;top:216px;width:80px;height:16px;background:#feefe7;"></div>
<div style="left:74px;top:216px;width:131px;height:16px;background:#ffd0d0;"></div>
<div style="left:406px;top:216px;width:330px;height:16px;background:#ffd0d0;"></div>
<div style="left:56px;top:217px;width:16px;height:15px;overflow:hidden"><svg width="16" height="13" viewBox="0 0 16 13"><rect x="0.6" y="0.6" width="14.8" height="11.8" fill="#fdfdfd" stroke="#7a7a7a" stroke-width="1.2"/><rect x="1.2" y="1.2" width="13.6" height="1.6" fill="#d5dce8"/><rect x="10.5" y="1.2" width="1" height="1.4" fill="#3b5f9a"/><rect x="12.3" y="1.2" width="1" height="1.4" fill="#3b5f9a"/><rect x="14" y="1.2" width="0.9" height="1.4" fill="#3b5f9a"/><rect x="2" y="4" width="5" height="6" fill="url(#ga)"/><rect x="8" y="5" width="4" height="1" fill="#bbb"/><rect x="8" y="7" width="4" height="1" fill="#bbb"/><rect x="8" y="9" width="4" height="1" fill="#bbb"/><rect x="13" y="4" width="1.2" height="4" fill="url(#gb)"/></svg></div>
<div style="left:43px;top:220px;width:9px;height:9px"><svg width="9" height="9" viewBox="0 0 9 9"><rect x="0.5" y="0.5" width="8" height="8" fill="#fff" stroke="#919191" stroke-width="1"/><rect x="2" y="4" width="5" height="1" fill="#3a5a9a"/></svg></div>
<div class="t" style="left:74px;top:214.5px;font-size:12px;line-height:16px;color:#000;transform:scaleX(0.8799999999999999);transform-origin:0 0;">nvvsvc.exe</div>
<div class="t" style="left:448px;top:214.5px;font-size:12px;line-height:16px;color:#000;transform:scaleX(0.8965);transform-origin:0 0;">NVIDIA Driver Helper Servic...</div>
<div class="t" style="left:598px;top:214.5px;font-size:12px;line-height:16px;color:#000;transform:scaleX(0.8855);transform-origin:0 0;">NVIDIA Corporation</div>
<div style="left:206px;top:232px;width:40px;height:16px;background:#eef8ee;"></div>
<div style="left:246px;top:232px;width:80px;height:16px;background:#fefae9;"></div>
<div style="left:326px;top:232px;width:80px;height:16px;background:#feefe7;"></div>
<div style="left:72px;top:233px;width:16px;height:15px;overflow:hidden"><svg width="15" height="13" viewBox="0 0 15 13"><defs><linearGradient id="ga" x1="0" y1="0" x2="0.3" y2="1"><stop offset="0" stop-color="#2f5fa8"/><stop offset="1" stop-color="#3aa35a"/></linearGradient><linearGradient id="gb" x1="0" y1="0" x2="0" y2="1"><stop offset="0" stop-color="#2f5fa8"/><stop offset="1" stop-color="#3aa35a"/></linearGradient></defs><rect x="0" y="0" width="15" height="13" fill="#fbfbfb"/><rect x="0" y="0" width="15" height="1.3" fill="#6e6e6e"/><rect x="0" y="11.7" width="15" height="1.3" fill="#6e6e6e"/><rect x="13.7" y="0" width="1.3" height="13" fill="#777"/><rect x="2" y="3" width="5.5" height="7.5" fill="url(#ga)"/><rect x="12" y="3" width="1.2" height="4" fill="url(#gb)"/><rect x="8.5" y="9" width="3" height="1.5" fill="#c8c8c8"/></svg></div>
<div class="t" style="left:90px;top:230.5px;font-size:12px;line-height:16px;color:#000;transform:scaleX(0.8799999999999999);transform-origin:0 0;">nvxdsync.exe</div>
<div style="left:206px;top:248px;width:40px;height:16px;background:#eef8ee;"></div>
<div style="left:246px;top:248px;width:80px;height:16px;background:#fefae9;"></div>
<div style="left:326px;top:248px;width:80px;height:16px;background:#feefe7;"></div>
<div style="left:72px;top:249px;width:16px;height:15px;overflow:hidden"><svg width="15" height="13" viewBox="0 0 15 13"><defs><linearGradient id="ga" x1="0" y1="0" x2="0.3" y2="1"><stop offset="0" stop-color="#2f5fa8"/><stop offset="1" stop-color="#3aa35a"/></linearGradient><linearGradient id="gb" x1="0" y1="0" x2="0" y2="1"><stop offset="0" stop-color="#2f5fa8"/><stop offset="1" stop-color="#3aa35a"/></linearGradient></defs><rect x="0" y="0" width="15" height="13" fill="#fbfbfb"/><rect x="0" y="0" width="15" height="1.3" fill="#6e6e6e"/><rect x="0" y="11.7" width="15" height="1.3" fill="#6e6e6e"/><rect x="13.7" y="0" width="1.3" height="13" fill="#777"/><rect x="2" y="3" width="5.5" height="7.5" fill="url(#ga)"/><rect x="12" y="3" width="1.2" height="4" fill="url(#gb)"/><rect x="8.5" y="9" width="3" height="1.5" fill="#c8c8c8"/></svg></div>
<div class="t" style="left:90px;top:246.5px;font-size:12px;line-height:16px;color:#000;transform:scaleX(0.8799999999999999);transform-origin:0 0;">nvvsvc.exe</div>
<div style="left:206px;top:264px;width:40px;height:16px;background:#eef8ee;"></div>
<div style="left:246px;top:264px;width:80px;height:16px;background:#fefae9;"></div>
<div style="left:326px;top:264px;width:80px;height:16px;background:#feefe7;"></div>
<div style="left:74px;top:264px;width:131px;height:16px;background:#ffd0d0;"></div>
<div style="left:406px;top:264px;width:330px;height:16px;background:#ffd0d0;"></div>
<div style="left:56px;top:265px;width:16px;height:15px;overflow:hidden"><svg width="16" height="13" viewBox="0 0 16 13"><rect x="0.6" y="0.6" width="14.8" height="11.8" fill="#fdfdfd" stroke="#7a7a7a" stroke-width="1.2"/><rect x="1.2" y="1.2" width="13.6" height="1.6" fill="#d5dce8"/><rect x="10.5" y="1.2" width="1" height="1.4" fill="#3b5f9a"/><rect x="12.3" y="1.2" width="1" height="1.4" fill="#3b5f9a"/><rect x="14" y="1.2" width="0.9" height="1.4" fill="#3b5f9a"/><rect x="2" y="4" width="5" height="6" fill="url(#ga)"/><rect x="8" y="5" width="4" height="1" fill="#bbb"/><rect x="8" y="7" width="4" height="1" fill="#bbb"/><rect x="8" y="9" width="4" height="1" fill="#bbb"/><rect x="13" y="4" width="1.2" height="4" fill="url(#gb)"/></svg></div>
<div style="left:43px;top:268px;width:9px;height:9px"><svg width="9" height="9" viewBox="0 0 9 9"><rect x="0.5" y="0.5" width="8" height="8" fill="#fff" stroke="#919191" stroke-width="1"/><rect x="2" y="4" width="5" height="1" fill="#3a5a9a"/></svg></div>
<div class="t" style="left:74px;top:262.5px;font-size:12px;line-height:16px;color:#000;transform:scaleX(0.89925);transform-origin:0 0;">svchost.exe</div>
<div class="t" style="left:448px;top:262.5px;font-size:12px;line-height:16px;color:#000;transform:scaleX(0.9001666666666667);transform-origin:0 0;">Хост-процесс для служб ...</div>
<div class="t" style="left:598px;top:262.5px;font-size:12px;line-height:16px;color:#000;transform:scaleX(0.8671666666666666);transform-origin:0 0;">Microsoft Corporation</div>
<div style="left:206px;top:280px;width:40px;height:16px;background:#eef8ee;"></div>
<div style="left:246px;top:280px;width:80px;height:16px;background:#fefae9;"></div>
<div style="left:326px;top:280px;width:80px;height:16px;background:#feefe7;"></div>
<div style="left:72px;top:281px;width:16px;height:15px;overflow:hidden"><svg width="15" height="13" viewBox="0 0 15 13"><defs><linearGradient id="ga" x1="0" y1="0" x2="0.3" y2="1"><stop offset="0" stop-color="#2f5fa8"/><stop offset="1" stop-color="#3aa35a"/></linearGradient><linearGradient id="gb" x1="0" y1="0" x2="0" y2="1"><stop offset="0" stop-color="#2f5fa8"/><stop offset="1" stop-color="#3aa35a"/></linearGradient></defs><rect x="0" y="0" width="15" height="13" fill="#fbfbfb"/><rect x="0" y="0" width="15" height="1.3" fill="#6e6e6e"/><rect x="0" y="11.7" width="15" height="1.3" fill="#6e6e6e"/><rect x="13.7" y="0" width="1.3" height="13" fill="#777"/><rect x="2" y="3" width="5.5" height="7.5" fill="url(#ga)"/><rect x="12" y="3" width="1.2" height="4" fill="url(#gb)"/><rect x="8.5" y="9" width="3" height="1.5" fill="#c8c8c8"/></svg></div>
<div class="t" style="left:90px;top:278.5px;font-size:12px;line-height:16px;color:#000;transform:scaleX(0.8799999999999999);transform-origin:0 0;">audiodg.exe</div>
<div style="left:206px;top:296px;width:40px;height:16px;background:#eef8ee;"></div>
<div style="left:246px;top:296px;width:80px;height:16px;background:#fefae9;"></div>
<div style="left:326px;top:296px;width:80px;height:16px;background:#feefe7;"></div>
<div style="left:74px;top:296px;width:131px;height:16px;background:#ffd0d0;"></div>
<div style="left:406px;top:296px;width:330px;height:16px;background:#ffd0d0;"></div>
<div style="left:56px;top:297px;width:16px;height:15px;overflow:hidden"><svg width="16" height="13" viewBox="0 0 16 13"><rect x="0.6" y="0.6" width="14.8" height="11.8" fill="#fdfdfd" stroke="#7a7a7a" stroke-width="1.2"/><rect x="1.2" y="1.2" width="13.6" height="1.6" fill="#d5dce8"/><rect x="10.5" y="1.2" width="1" height="1.4" fill="#3b5f9a"/><rect x="12.3" y="1.2" width="1" height="1.4" fill="#3b5f9a"/><rect x="14" y="1.2" width="0.9" height="1.4" fill="#3b5f9a"/><rect x="2" y="4" width="5" height="6" fill="url(#ga)"/><rect x="8" y="5" width="4" height="1" fill="#bbb"/><rect x="8" y="7" width="4" height="1" fill="#bbb"/><rect x="8" y="9" width="4" height="1" fill="#bbb"/><rect x="13" y="4" width="1.2" height="4" fill="url(#gb)"/></svg></div>
<div style="left:43px;top:300px;width:9px;height:9px"><svg width="9" height="9" viewBox="0 0 9 9"><rect x="0.5" y="0.5" width="8" height="8" fill="#fff" stroke="#919191" stroke-width="1"/><rect x="2" y="4" width="5" height="1" fill="#3a5a9a"/></svg></div>
<div class="t" style="left:74px;top:294.5px;font-size:12px;line-height:16px;color:#000;transform:scaleX(0.89925);transform-origin:0 0;">svchost.exe</div>
<div class="t" style="left:448px;top:294.5px;font-size:12px;line-height:16px;color:#000;transform:scaleX(0.9001666666666667);transform-origin:0 0;">Хост-процесс для служб ...</div>
<div class="t" style="left:598px;top:294.5px;font-size:12px;line-height:16px;color:#000;transform:scaleX(0.8671666666666666);transform-origin:0 0;">Microsoft Corporation</div>
<div style="left:206px;top:312px;width:40px;height:16px;background:#eef8ee;"></div>
<div style="left:246px;top:312px;width:80px;height:16px;background:#fefae9;"></div>
<div style="left:326px;top:312px;width:80px;height:16px;background:#feefe7;"></div>
<div style="left:90px;top:312px;width:115px;height:16px;background:#d0d0ff;"></div>
<div style="left:406px;top:312px;width:330px;height:16px;background:#d0d0ff;"></div>
<div style="left:72px;top:313px;width:16px;height:15px;overflow:hidden"><svg width="16" height="13" viewBox="0 0 16 13"><rect x="0.6" y="0.6" width="14.8" height="11.8" fill="#fdfdfd" stroke="#7a7a7a" stroke-width="1.2"/><rect x="1.2" y="1.2" width="13.6" height="1.6" fill="#d5dce8"/><rect x="10.5" y="1.2" width="1" height="1.4" fill="#3b5f9a"/><rect x="12.3" y="1.2" width="1" height="1.4" fill="#3b5f9a"/><rect x="14" y="1.2" width="0.9" height="1.4" fill="#3b5f9a"/><rect x="2" y="4" width="5" height="6" fill="url(#ga)"/><rect x="8" y="5" width="4" height="1" fill="#bbb"/><rect x="8" y="7" width="4" height="1" fill="#bbb"/><rect x="8" y="9" width="4" height="1" fill="#bbb"/><rect x="13" y="4" width="1.2" height="4" fill="url(#gb)"/></svg></div>
<div class="t" style="left:90px;top:310.5px;font-size:12px;line-height:16px;color:#000;transform:scaleX(0.8799999999999999);transform-origin:0 0;">taskhost.exe</div>
<div class="t" style="left:448px;top:310.5px;font-size:12px;line-height:16px;color:#000;transform:scaleX(0.9166666666666666);transform-origin:0 0;">Хост-процесс для задач W...</div>
<div class="t" style="left:598px;top:310.5px;font-size:12px;line-height:16px;color:#000;transform:scaleX(0.8671666666666666);transform-origin:0 0;">Microsoft Corporation</div>
<div style="left:206px;top:328px;width:40px;height:16px;background:#eef8ee;"></div>
<div style="left:246px;top:328px;width:80px;height:16px;background:#fefae9;"></div>
<div style="left:326px;top:328px;width:80px;height:16px;background:#feefe7;"></div>
<div style="left:72px;top:329px;width:16px;height:15px;overflow:hidden"><svg width="15" height="13" viewBox="0 0 15 13"><defs><linearGradient id="ga" x1="0" y1="0" x2="0.3" y2="1"><stop offset="0" stop-color="#2f5fa8"/><stop offset="1" stop-color="#3aa35a"/></linearGradient><linearGradient id="gb" x1="0" y1="0" x2="0" y2="1"><stop offset="0" stop-color="#2f5fa8"/><stop offset="1" stop-color="#3aa35a"/></linearGradient></defs><rect x="0" y="0" width="15" height="13" fill="#fbfbfb"/><rect x="0" y="0" width="15" height="1.3" fill="#6e6e6e"/><rect x="0" y="11.7" width="15" height="1.3" fill="#6e6e6e"/><rect x="13.7" y="0" width="1.3" height="13" fill="#777"/><rect x="2" y="3" width="5.5" height="7.5" fill="url(#ga)"/><rect x="12" y="3" width="1.2" height="4" fill="url(#gb)"/><rect x="8.5" y="9" width="3" height="1.5" fill="#c8c8c8"/></svg></div>
<div class="t" style="left:90px;top:326.5px;font-size:12px;line-height:16px;color:#000;transform:scaleX(0.8799999999999999);transform-origin:0 0;">taskhost.exe</div>
<div style="left:206px;top:344px;width:40px;height:16px;background:#eef8ee;"></div>
<div style="left:246px;top:344px;width:80px;height:16px;background:#fefae9;"></div>
<div style="left:326px;top:344px;width:80px;height:16px;background:#feefe7;"></div>
<div style="left:90px;top:344px;width:115px;height:16px;background:#d0d0ff;"></div>
<div style="left:406px;top:344px;width:330px;height:16px;background:#d0d0ff;"></div>
<div style="left:72px;top:345px;width:16px;height:15px;overflow:hidden"><svg width="15" height="13" viewBox="0 0 15 13"><defs><linearGradient id="ga" x1="0" y1="0" x2="0.3" y2="1"><stop offset="0" stop-color="#2f5fa8"/><stop offset="1" stop-color="#3aa35a"/></linearGradient><linearGradient id="gb" x1="0" y1="0" x2="0" y2="1"><stop offset="0" stop-color="#2f5fa8"/><stop offset="1" stop-color="#3aa35a"/></linearGradient></defs><rect x="0" y="0" width="15" height="13" fill="#fbfbfb"/><rect x="0" y="0" width="15" height="1.3" fill="#6e6e6e"/><rect x="0" y="11.7" width="15" height="1.3" fill="#6e6e6e"/><rect x="13.7" y="0" width="1.3" height="13" fill="#777"/><rect x="2" y="3" width="5.5" height="7.5" fill="url(#ga)"/><rect x="12" y="3" width="1.2" height="4" fill="url(#gb)"/><rect x="8.5" y="9" width="3" height="1.5" fill="#c8c8c8"/></svg></div>
<div class="t" style="left:90px;top:342.5px;font-size:12px;line-height:16px;color:#000;transform:scaleX(0.8799999999999999);transform-origin:0 0;">taskhost.exe</div>
<div style="left:206px;top:360px;width:40px;height:16px;background:#eef8ee;"></div>
<div style="left:246px;top:360px;width:80px;height:16px;background:#fefae9;"></div>
<div style="left:326px;top:360px;width:80px;height:16px;background:#feefe7;"></div>
<div style="left:74px;top:360px;width:131px;height:16px;background:#ffd0d0;"></div>
<div style="left:406px;top:360px;width:330px;height:16px;background:#ffd0d0;"></div>
<div style="left:56px;top:361px;width:16px;height:15px;overflow:hidden"><svg width="16" height="13" viewBox="0 0 16 13"><rect x="0.6" y="0.6" width="14.8" height="11.8" fill="#fdfdfd" stroke="#7a7a7a" stroke-width="1.2"/><rect x="1.2" y="1.2" width="13.6" height="1.6" fill="#d5dce8"/><rect x="10.5" y="1.2" width="1" height="1.4" fill="#3b5f9a"/><rect x="12.3" y="1.2" width="1" height="1.4" fill="#3b5f9a"/><rect x="14" y="1.2" width="0.9" height="1.4" fill="#3b5f9a"/><rect x="2" y="4" width="5" height="6" fill="url(#ga)"/><rect x="8" y="5" width="4" height="1" fill="#bbb"/><rect x="8" y="7" width="4" height="1" fill="#bbb"/><rect x="8" y="9" width="4" height="1" fill="#bbb"/><rect x="13" y="4" width="1.2" height="4" fill="url(#gb)"/></svg></div>
<div class="t" style="left:74px;top:358.5px;font-size:12px;line-height:16px;color:#000;transform:scaleX(0.89925);transform-origin:0 0;">svchost.exe</div>
<div class="t" style="right:473px;top:358.5px;font-size:12px;line-height:16px;color:#000;transform:scaleX(0.9075);transform-origin:100% 0;">8 512 K</div>
<div class="t" style="right:393px;top:358.5px;font-size:12px;line-height:16px;color:#000;transform:scaleX(0.9075);transform-origin:100% 0;">10 540 K</div>
<div class="t" style="right:353px;top:358.5px;font-size:12px;line-height:16px;color:#000;transform:scaleX(0.8891666666666667);transform-origin:100% 0;">504</div>
<div class="t" style="left:448px;top:358.5px;font-size:12px;line-height:16px;color:#000;transform:scaleX(0.9001666666666667);transform-origin:0 0;">Хост-процесс для служб ...</div>
<div class="t" style="left:598px;top:358.5px;font-size:12px;line-height:16px;color:#000;transform:scaleX(0.8671666666666666);transform-origin:0 0;">Microsoft Corporation</div>
<div style="left:206px;top:376px;width:40px;height:16px;background:#eef8ee;"></div>
<div style="left:246px;top:376px;width:80px;height:16px;background:#fefae9;"></div>
<div style="left:326px;top:376px;width:80px;height:16px;background:#feefe7;"></div>
<div style="left:74px;top:376px;width:131px;height:16px;background:#ffd0d0;"></div>
<div style="left:406px;top:376px;width:330px;height:16px;background:#ffd0d0;"></div>
<div style="left:56px;top:377px;width:16px;height:15px;overflow:hidden"><svg width="16" height="13" viewBox="0 0 16 13"><rect x="0.6" y="0.6" width="14.8" height="11.8" fill="#fdfdfd" stroke="#7a7a7a" stroke-width="1.2"/><rect x="1.2" y="1.2" width="13.6" height="1.6" fill="#d5dce8"/><rect x="10.5" y="1.2" width="1" height="1.4" fill="#3b5f9a"/><rect x="12.3" y="1.2" width="1" height="1.4" fill="#3b5f9a"/><rect x="14" y="1.2" width="0.9" height="1.4" fill="#3b5f9a"/><rect x="2" y="4" width="5" height="6" fill="url(#ga)"/><rect x="8" y="5" width="4" height="1" fill="#bbb"/><rect x="8" y="7" width="4" height="1" fill="#bbb"/><rect x="8" y="9" width="4" height="1" fill="#bbb"/><rect x="13" y="4" width="1.2" height="4" fill="url(#gb)"/></svg></div>
<div style="left:43px;top:380px;width:9px;height:9px"><svg width="9" height="9" viewBox="0 0 9 9"><rect x="0.5" y="0.5" width="8" height="8" fill="#fff" stroke="#919191" stroke-width="1"/><rect x="2" y="4" width="5" height="1" fill="#3a5a9a"/></svg></div>
<div class="t" style="left:74px;top:374.5px;font-size:12px;line-height:16px;color:#000;transform:scaleX(0.89925);transform-origin:0 0;">svchost.exe</div>
<div class="t" style="right:553px;top:374.5px;font-size:12px;line-height:16px;color:#000;transform:scaleX(0.9166666666666666);transform-origin:100% 0;">0.38</div>
<div class="t" style="right:473px;top:374.5px;font-size:12px;line-height:16px;color:#000;transform:scaleX(0.9075);transform-origin:100% 0;">76 456 K</div>
<div class="t" style="right:393px;top:374.5px;font-size:12px;line-height:16px;color:#000;transform:scaleX(0.9075);transform-origin:100% 0;">67 648 K</div>
<div class="t" style="right:353px;top:374.5px;font-size:12px;line-height:16px;color:#000;transform:scaleX(0.8891666666666667);transform-origin:100% 0;">1104</div>
<div class="t" style="left:448px;top:374.5px;font-size:12px;line-height:16px;color:#000;transform:scaleX(0.9001666666666667);transform-origin:0 0;">Хост-процесс для служб ...</div>
<div class="t" style="left:598px;top:374.5px;font-size:12px;line-height:16px;color:#000;transform:scaleX(0.8671666666666666);transform-origin:0 0;">Microsoft Corporation</div>
<div style="left:206px;top:392px;width:40px;height:16px;background:#eef8ee;"></div>
<div style="left:246px;top:392px;width:80px;height:16px;background:#fefae9;"></div>
<div style="left:326px;top:392px;width:80px;height:16px;background:#feefe7;"></div>
<div style="left:72px;top:393px;width:16px;height:15px;overflow:hidden"><svg width="15" height="13" viewBox="0 0 15 13"><defs><linearGradient id="ga" x1="0" y1="0" x2="0.3" y2="1"><stop offset="0" stop-color="#2f5fa8"/><stop offset="1" stop-color="#3aa35a"/></linearGradient><linearGradient id="gb" x1="0" y1="0" x2="0" y2="1"><stop offset="0" stop-color="#2f5fa8"/><stop offset="1" stop-color="#3aa35a"/></linearGradient></defs><rect x="0" y="0" width="15" height="13" fill="#fbfbfb"/><rect x="0" y="0" width="15" height="1.3" fill="#6e6e6e"/><rect x="0" y="11.7" width="15" height="1.3" fill="#6e6e6e"/><rect x="13.7" y="0" width="1.3" height="13" fill="#777"/><rect x="2" y="3" width="5.5" height="7.5" fill="url(#ga)"/><rect x="12" y="3" width="1.2" height="4" fill="url(#gb)"/><rect x="8.5" y="9" width="3" height="1.5" fill="#c8c8c8"/></svg></div>
<div class="t" style="left:90px;top:390.5px;font-size:12px;line-height:16px;color:#000;transform:scaleX(0.8827499999999999);transform-origin:0 0;">dasHost.exe</div>
<div class="t" style="right:473px;top:390.5px;font-size:12px;line-height:16px;color:#000;transform:scaleX(0.9075);transform-origin:100% 0;">760 K</div>
<div class="t" style="right:393px;top:390.5px;font-size:12px;line-height:16px;color:#000;transform:scaleX(0.9075);transform-origin:100% 0;">2 808 K</div>
<div class="t" style="right:353px;top:390.5px;font-size:12px;line-height:16px;color:#000;transform:scaleX(0.8891666666666667);transform-origin:100% 0;">1872</div>
<div style="left:206px;top:408px;width:40px;height:16px;background:#eef8ee;"></div>
<div style="left:246px;top:408px;width:80px;height:16px;background:#fefae9;"></div>
<div style="left:326px;top:408px;width:80px;height:16px;background:#feefe7;"></div>
<div style="left:72px;top:409px;width:16px;height:15px;overflow:hidden"><svg width="15" height="13" viewBox="0 0 15 13"><defs><linearGradient id="ga" x1="0" y1="0" x2="0.3" y2="1"><stop offset="0" stop-color="#2f5fa8"/><stop offset="1" stop-color="#3aa35a"/></linearGradient><linearGradient id="gb" x1="0" y1="0" x2="0" y2="1"><stop offset="0" stop-color="#2f5fa8"/><stop offset="1" stop-color="#3aa35a"/></linearGradient></defs><rect x="0" y="0" width="15" height="13" fill="#fbfbfb"/><rect x="0" y="0" width="15" height="1.3" fill="#6e6e6e"/><rect x="0" y="11.7" width="15" height="1.3" fill="#6e6e6e"/><rect x="13.7" y="0" width="1.3" height="13" fill="#777"/><rect x="2" y="3" width="5.5" height="7.5" fill="url(#ga)"/><rect x="12" y="3" width="1.2" height="4" fill="url(#gb)"/><rect x="8.5" y="9" width="3" height="1.5" fill="#c8c8c8"/></svg></div>
<div class="t" style="left:90px;top:406.5px;font-size:12px;line-height:16px;color:#000;transform:scaleX(0.8946666666666666);transform-origin:0 0;">WUDFHost.exe</div>
<div class="t" style="right:473px;top:406.5px;font-size:12px;line-height:16px;color:#000;transform:scaleX(0.9075);transform-origin:100% 0;">1 376 K</div>
<div class="t" style="right:393px;top:406.5px;font-size:12px;line-height:16px;color:#000;transform:scaleX(0.9075);transform-origin:100% 0;">3 916 K</div>
<div class="t" style="right:353px;top:406.5px;font-size:12px;line-height:16px;color:#000;transform:scaleX(0.8891666666666667);transform-origin:100% 0;">2544</div>
<div style="left:206px;top:424px;width:40px;height:16px;background:#eef8ee;"></div>
<div style="left:246px;top:424px;width:80px;height:16px;background:#fefae9;"></div>
<div style="left:326px;top:424px;width:80px;height:16px;background:#feefe7;"></div>
<div style="left:74px;top:424px;width:131px;height:16px;background:#ffd0d0;"></div>
<div style="left:406px;top:424px;width:330px;height:16px;background:#ffd0d0;"></div>
<div style="left:56px;top:424px;width:16px;height:16px;overflow:hidden"><svg width="16" height="16" viewBox="0 0 16 16"><rect x="0.5" y="0.5" width="15" height="15" fill="#5f7f6c" stroke="#37493d" stroke-width="1"/><ellipse cx="7" cy="11" rx="5" ry="4" fill="#2f5478" transform="rotate(-35 7 11)"/><rect x="10" y="3" width="2.5" height="10" fill="#3d6080"/><path d="M7.5 3 L7.5 11.5" stroke="#fff" stroke-width="1.6"/><path d="M7.5 3 Q9 4 11 5" stroke="#fff" stroke-width="1.6" fill="none"/><ellipse cx="5.5" cy="12" rx="2.6" ry="1.9" fill="#fff" transform="rotate(-25 5.5 12)"/></svg></div>
<div class="t" style="left:74px;top:422.5px;font-size:12px;line-height:16px;color:#000;transform:scaleX(0.9019999999999999);transform-origin:0 0;">stacsv64.exe</div>
<div class="t" style="right:553px;top:422.5px;font-size:12px;line-height:16px;color:#000;transform:scaleX(0.9166666666666666);transform-origin:100% 0;">0.03</div>
<div class="t" style="right:473px;top:422.5px;font-size:12px;line-height:16px;color:#000;transform:scaleX(0.9075);transform-origin:100% 0;">4 792 K</div>
<div class="t" style="right:393px;top:422.5px;font-size:12px;line-height:16px;color:#000;transform:scaleX(0.9075);transform-origin:100% 0;">7 036 K</div>
<div class="t" style="right:353px;top:422.5px;font-size:12px;line-height:16px;color:#000;transform:scaleX(0.8891666666666667);transform-origin:100% 0;">1140</div>
<div class="t" style="left:448px;top:422.5px;font-size:12px;line-height:16px;color:#000;transform:scaleX(0.8965);transform-origin:0 0;">IDT PC Audio</div>
<div class="t" style="left:598px;top:422.5px;font-size:12px;line-height:16px;color:#000;transform:scaleX(0.9533333333333334);transform-origin:0 0;">IDT, Inc.</div>
<div style="left:206px;top:440px;width:40px;height:16px;background:#eef8ee;"></div>
<div style="left:246px;top:440px;width:80px;height:16px;background:#fefae9;"></div>
<div style="left:326px;top:440px;width:80px;height:16px;background:#feefe7;"></div>
<div style="left:74px;top:440px;width:131px;height:16px;background:#ffd0d0;"></div>
<div style="left:406px;top:440px;width:330px;height:16px;background:#ffd0d0;"></div>
<div style="left:56px;top:441px;width:16px;height:15px;overflow:hidden"><svg width="16" height="13" viewBox="0 0 16 13"><rect x="0.6" y="0.6" width="14.8" height="11.8" fill="#fdfdfd" stroke="#7a7a7a" stroke-width="1.2"/><rect x="1.2" y="1.2" width="13.6" height="1.6" fill="#d5dce8"/><rect x="10.5" y="1.2" width="1" height="1.4" fill="#3b5f9a"/><rect x="12.3" y="1.2" width="1" height="1.4" fill="#3b5f9a"/><rect x="14" y="1.2" width="0.9" height="1.4" fill="#3b5f9a"/><rect x="2" y="4" width="5" height="6" fill="url(#ga)"/><rect x="8" y="5" width="4" height="1" fill="#bbb"/><rect x="8" y="7" width="4" height="1" fill="#bbb"/><rect x="8" y="9" width="4" height="1" fill="#bbb"/><rect x="13" y="4" width="1.2" height="4" fill="url(#gb)"/></svg></div>
<div class="t" style="left:74px;top:438.5px;font-size:12px;line-height:16px;color:#000;transform:scaleX(0.89925);transform-origin:0 0;">svchost.exe</div>
<div class="t" style="right:473px;top:438.5px;font-size:12px;line-height:16px;color:#000;transform:scaleX(0.9075);transform-origin:100% 0;">8 624 K</div>
<div class="t" style="right:393px;top:438.5px;font-size:12px;line-height:16px;color:#000;transform:scaleX(0.9075);transform-origin:100% 0;">13 612 K</div>
<div class="t" style="right:353px;top:438.5px;font-size:12px;line-height:16px;color:#000;transform:scaleX(0.8891666666666667);transform-origin:100% 0;">1304</div>
<div class="t" style="left:448px;top:438.5px;font-size:12px;line-height:16px;color:#000;transform:scaleX(0.9001666666666667);transform-origin:0 0;">Хост-процесс для служб ...</div>
<div class="t" style="left:598px;top:438.5px;font-size:12px;line-height:16px;color:#000;transform:scaleX(0.8671666666666666);transform-origin:0 0;">Microsoft Corporation</div>
<div style="left:206px;top:456px;width:40px;height:16px;background:#eef8ee;"></div>
<div style="left:246px;top:456px;width:80px;height:16px;background:#fefae9;"></div>
<div style="left:326px;top:456px;width:80px;height:16px;background:#feefe7;"></div>
<div style="left:74px;top:456px;width:131px;height:16px;background:#ffd0d0;"></div>
<div style="left:406px;top:456px;width:330px;height:16px;background:#ffd0d0;"></div>
<div style="left:56px;top:457px;width:16px;height:15px;overflow:hidden"><svg width="16" height="13" viewBox="0 0 16 13"><rect x="0.6" y="0.6" width="14.8" height="11.8" fill="#fdfdfd" stroke="#7a7a7a" stroke-width="1.2"/><rect x="1.2" y="1.2" width="13.6" height="1.6" fill="#d5dce8"/><rect x="10.5" y="1.2" width="1" height="1.4" fill="#3b5f9a"/><rect x="12.3" y="1.2" width="1" height="1.4" fill="#3b5f9a"/><rect x="14" y="1.2" width="0.9" height="1.4" fill="#3b5f9a"/><rect x="2" y="4" width="5" height="6" fill="url(#ga)"/><rect x="8" y="5" width="4" height="1" fill="#bbb"/><rect x="8" y="7" width="4" height="1" fill="#bbb"/><rect x="8" y="9" width="4" height="1" fill="#bbb"/><rect x="13" y="4" width="1.2" height="4" fill="url(#gb)"/></svg></div>
<div class="t" style="left:74px;top:454.5px;font-size:12px;line-height:16px;color:#000;transform:scaleX(0.89925);transform-origin:0 0;">svchost.exe</div>
<div class="t" style="right:473px;top:454.5px;font-size:12px;line-height:16px;color:#000;transform:scaleX(0.9075);transform-origin:100% 0;">17 776 K</div>
<div class="t" style="right:393px;top:454.5px;font-size:12px;line-height:16px;color:#000;transform:scaleX(0.9075);transform-origin:100% 0;">18 300 K</div>
<div class="t" style="right:353px;top:454.5px;font-size:12px;line-height:16px;color:#000;transform:scaleX(0.8891666666666667);transform-origin:100% 0;">1360</div>
<div class="t" style="left:448px;top:454.5px;font-size:12px;line-height:16px;color:#000;transform:scaleX(0.9001666666666667);transform-origin:0 0;">Хост-процесс для служб ...</div>
<div class="t" style="left:598px;top:454.5px;font-size:12px;line-height:16px;color:#000;transform:scaleX(0.8671666666666666);transform-origin:0 0;">Microsoft Corporation</div>
<div style="left:206px;top:472px;width:40px;height:16px;background:#eef8ee;"></div>
<div style="left:246px;top:472px;width:80px;height:16px;background:#fefae9;"></div>
<div style="left:326px;top:472px;width:80px;height:16px;background:#feefe7;"></div>
<div style="left:74px;top:472px;width:131px;height:16px;background:#ffd0d0;"></div>
<div style="left:406px;top:472px;width:330px;height:16px;background:#ffd0d0;"></div>
<div style="left:56px;top:472px;width:16px;height:16px;overflow:hidden"><svg width="16" height="16" viewBox="0 0 16 16"><rect x="4" y="1" width="8" height="5" fill="#f6f6f6" stroke="#8a8a8a" stroke-width="1"/><rect x="0.5" y="5.5" width="15" height="7" rx="1" fill="#cfcfcf" stroke="#7a7a7a" stroke-width="1"/><rect x="3" y="6" width="10" height="5" fill="#5a5a5a"/><rect x="13" y="10" width="1.2" height="1.2" fill="#5c5"/><rect x="4" y="11" width="8" height="5" fill="#fff" stroke="#8a8a8a" stroke-width="1"/><rect x="6" y="12.5" width="2" height="2" fill="#3a8ad8"/><rect x="8" y="12.5" width="2" height="2" fill="#2a7a4a"/></svg></div>
<div class="t" style="left:74px;top:470.5px;font-size:12px;line-height:16px;color:#000;transform:scaleX(0.8974166666666666);transform-origin:0 0;">spoolsv.exe</div>
<div class="t" style="right:473px;top:470.5px;font-size:12px;line-height:16px;color:#000;transform:scaleX(0.9075);transform-origin:100% 0;">4 748 K</div>
<div class="t" style="right:393px;top:470.5px;font-size:12px;line-height:16px;color:#000;transform:scaleX(0.9075);transform-origin:100% 0;">8 304 K</div>
<div class="t" style="right:353px;top:470.5px;font-size:12px;line-height:16px;color:#000;transform:scaleX(0.8891666666666667);transform-origin:100% 0;">1516</div>
<div class="t" style="left:448px;top:470.5px;font-size:12px;line-height:16px;color:#000;transform:scaleX(0.9166666666666666);transform-origin:0 0;">Диспетчер очереди печати</div>
<div class="t" style="left:598px;top:470.5px;font-size:12px;line-height:16px;color:#000;transform:scaleX(0.8671666666666666);transform-origin:0 0;">Microsoft Corporation</div>
<div style="left:206px;top:488px;width:40px;height:16px;background:#eef8ee;"></div>
<div style="left:246px;top:488px;width:80px;height:16px;background:#fefae9;"></div>
<div style="left:326px;top:488px;width:80px;height:16px;background:#feefe7;"></div>
<div style="left:74px;top:488px;width:131px;height:16px;background:#ffd0d0;"></div>
<div style="left:406px;top:488px;width:330px;height:16px;background:#ffd0d0;"></div>
<div style="left:56px;top:489px;width:16px;height:15px;overflow:hidden"><svg width="16" height="13" viewBox="0 0 16 13"><rect x="0.6" y="0.6" width="14.8" height="11.8" fill="#fdfdfd" stroke="#7a7a7a" stroke-width="1.2"/><rect x="1.2" y="1.2" width="13.6" height="1.6" fill="#d5dce8"/><rect x="10.5" y="1.2" width="1" height="1.4" fill="#3b5f9a"/><rect x="12.3" y="1.2" width="1" height="1.4" fill="#3b5f9a"/><rect x="14" y="1.2" width="0.9" height="1.4" fill="#3b5f9a"/><rect x="2" y="4" width="5" height="6" fill="url(#ga)"/><rect x="8" y="5" width="4" height="1" fill="#bbb"/><rect x="8" y="7" width="4" height="1" fill="#bbb"/><rect x="8" y="9" width="4" height="1" fill="#bbb"/><rect x="13" y="4" width="1.2" height="4" fill="url(#gb)"/></svg></div>
<div class="t" style="left:74px;top:486.5px;font-size:12px;line-height:16px;color:#000;transform:scaleX(0.89925);transform-origin:0 0;">svchost.exe</div>
<div class="t" style="right:553px;top:486.5px;font-size:12px;line-height:16px;color:#000;transform:scaleX(0.9166666666666666);transform-origin:100% 0;">0.01</div>
<div class="t" style="right:473px;top:486.5px;font-size:12px;line-height:16px;color:#000;transform:scaleX(0.9075);transform-origin:100% 0;">3 236 K</div>
<div class="t" style="right:393px;top:486.5px;font-size:12px;line-height:16px;color:#000;transform:scaleX(0.9075);transform-origin:100% 0;">4 808 K</div>
<div class="t" style="right:353px;top:486.5px;font-size:12px;line-height:16px;color:#000;transform:scaleX(0.8891666666666667);transform-origin:100% 0;">1756</div>
<div class="t" style="left:448px;top:486.5px;font-size:12px;line-height:16px;color:#000;transform:scaleX(0.9001666666666667);transform-origin:0 0;">Хост-процесс для служб ...</div>
<div class="t" style="left:598px;top:486.5px;font-size:12px;line-height:16px;color:#000;transform:scaleX(0.8671666666666666);transform-origin:0 0;">Microsoft Corporation</div>
<div style="left:206px;top:504px;width:40px;height:16px;background:#eef8ee;"></div>
<div style="left:246px;top:504px;width:80px;height:16px;background:#fefae9;"></div>
<div style="left:326px;top:504px;width:80px;height:16px;background:#feefe7;"></div>
<div style="left:74px;top:504px;width:131px;height:16px;background:#ffd0d0;"></div>
<div style="left:406px;top:504px;width:330px;height:16px;background:#ffd0d0;"></div>
<div style="left:56px;top:505px;width:16px;height:15px;overflow:hidden"><svg width="16" height="13" viewBox="0 0 16 13"><rect x="0.6" y="0.6" width="14.8" height="11.8" fill="#fdfdfd" stroke="#7a7a7a" stroke-width="1.2"/><rect x="1.2" y="1.2" width="13.6" height="1.6" fill="#d5dce8"/><rect x="10.5" y="1.2" width="1" height="1.4" fill="#3b5f9a"/><rect x="12.3" y="1.2" width="1" height="1.4" fill="#3b5f9a"/><rect x="14" y="1.2" width="0.9" height="1.4" fill="#3b5f9a"/><rect x="2" y="4" width="5" height="6" fill="url(#ga)"/><rect x="8" y="5" width="4" height="1" fill="#bbb"/><rect x="8" y="7" width="4" height="1" fill="#bbb"/><rect x="8" y="9" width="4" height="1" fill="#bbb"/><rect x="13" y="4" width="1.2" height="4" fill="url(#gb)"/></svg></div>
<div class="t" style="left:74px;top:502.5px;font-size:12px;line-height:16px;color:#000;transform:scaleX(0.8799999999999999);transform-origin:0 0;">mDNSResponder.exe</div>
<div class="t" style="right:473px;top:502.5px;font-size:12px;line-height:16px;color:#000;transform:scaleX(0.9075);transform-origin:100% 0;">1 328 K</div>
<div class="t" style="right:393px;top:502.5px;font-size:12px;line-height:16px;color:#000;transform:scaleX(0.9075);transform-origin:100% 0;">3 896 K</div>
<div class="t" style="right:353px;top:502.5px;font-size:12px;line-height:16px;color:#000;transform:scaleX(0.8891666666666667);transform-origin:100% 0;">1772</div>
<div class="t" style="left:448px;top:502.5px;font-size:12px;line-height:16px;color:#000;transform:scaleX(0.8864166666666666);transform-origin:0 0;">Bonjour Service</div>
<div class="t" style="left:598px;top:502.5px;font-size:12px;line-height:16px;color:#000;transform:scaleX(0.9010833333333332);transform-origin:0 0;">Apple Inc.</div>
<div style="left:206px;top:520px;width:40px;height:16px;background:#eef8ee;"></div>
<div style="left:246px;top:520px;width:80px;height:16px;background:#fefae9;"></div>
<div style="left:326px;top:520px;width:80px;height:16px;background:#feefe7;"></div>
<div style="left:74px;top:520px;width:131px;height:16px;background:#ffd0d0;"></div>
<div style="left:406px;top:520px;width:330px;height:16px;background:#ffd0d0;"></div>
<div style="left:56px;top:521px;width:16px;height:15px;overflow:hidden"><svg width="16" height="13" viewBox="0 0 16 13"><rect x="0.6" y="0.6" width="14.8" height="11.8" fill="#fdfdfd" stroke="#7a7a7a" stroke-width="1.2"/><rect x="1.2" y="1.2" width="13.6" height="1.6" fill="#d5dce8"/><rect x="10.5" y="1.2" width="1" height="1.4" fill="#3b5f9a"/><rect x="12.3" y="1.2" width="1" height="1.4" fill="#3b5f9a"/><rect x="14" y="1.2" width="0.9" height="1.4" fill="#3b5f9a"/><rect x="2" y="4" width="5" height="6" fill="url(#ga)"/><rect x="8" y="5" width="4" height="1" fill="#bbb"/><rect x="8" y="7" width="4" height="1" fill="#bbb"/><rect x="8" y="9" width="4" height="1" fill="#bbb"/><rect x="13" y="4" width="1.2" height="4" fill="url(#gb)"/></svg></div>
<div style="left:43px;top:524px;width:9px;height:9px"><svg width="9" height="9" viewBox="0 0 9 9"><rect x="0.5" y="0.5" width="8" height="8" fill="#fff" stroke="#919191" stroke-width="1"/><rect x="2" y="4" width="5" height="1" fill="#3a5a9a"/></svg></div>
<div class="t" style="left:74px;top:518.5px;font-size:12px;line-height:16px;color:#000;transform:scaleX(0.9129999999999999);transform-origin:0 0;">HWDeviceService64.exe</div>
<div class="t" style="right:473px;top:518.5px;font-size:12px;line-height:16px;color:#000;transform:scaleX(0.9075);transform-origin:100% 0;">1 220 K</div>
<div class="t" style="right:393px;top:518.5px;font-size:12px;line-height:16px;color:#000;transform:scaleX(0.9075);transform-origin:100% 0;">4 120 K</div>
<div class="t" style="right:353px;top:518.5px;font-size:12px;line-height:16px;color:#000;transform:scaleX(0.8891666666666667);transform-origin:100% 0;">1864</div>
<div class="t" style="left:448px;top:518.5px;font-size:12px;line-height:16px;color:#000;transform:scaleX(0.8827499999999999);transform-origin:0 0;">DCSHOST</div>
<div style="left:206px;top:536px;width:40px;height:6px;background:#eef8ee;"></div>
<div style="left:246px;top:536px;width:80px;height:6px;background:#fefae9;"></div>
<div style="left:326px;top:536px;width:80px;height:6px;background:#feefe7;"></div>
<div style="left:90px;top:536px;width:115px;height:6px;background:#d0d0ff;"></div>
<div style="left:406px;top:536px;width:330px;height:6px;background:#d0d0ff;"></div>
<div style="left:72px;top:537px;overflow:hidden;height:6px;width:16px;height:5px;overflow:hidden"><svg width="15" height="13" viewBox="0 0 15 13"><defs><linearGradient id="ga" x1="0" y1="0" x2="0.3" y2="1"><stop offset="0" stop-color="#2f5fa8"/><stop offset="1" stop-color="#3aa35a"/></linearGradient><linearGradient id="gb" x1="0" y1="0" x2="0" y2="1"><stop offset="0" stop-color="#2f5fa8"/><stop offset="1" stop-color="#3aa35a"/></linearGradient></defs><rect x="0" y="0" width="15" height="13" fill="#fbfbfb"/><rect x="0" y="0" width="15" height="1.3" fill="#6e6e6e"/><rect x="0" y="11.7" width="15" height="1.3" fill="#6e6e6e"/><rect x="13.7" y="0" width="1.3" height="13" fill="#777"/><rect x="2" y="3" width="5.5" height="7.5" fill="url(#ga)"/><rect x="12" y="3" width="1.2" height="4" fill="url(#gb)"/><rect x="8.5" y="9" width="3" height="1.5" fill="#c8c8c8"/></svg></div>
<div style="left:0;top:536px;width:797px;height:6px;overflow:hidden">
<div class="t" style="left:90px;top:-1.5px;font-size:12px;line-height:16px;color:#000;transform:scaleX(0.8799999999999999);transform-origin:0 0;">PCSHelper.exe</div>
<div class="t" style="right:473px;top:-1.5px;font-size:12px;line-height:16px;color:#000;transform:scaleX(0.9075);transform-origin:100% 0;">1 720 K</div>
<div class="t" style="right:393px;top:-1.5px;font-size:12px;line-height:16px;color:#000;transform:scaleX(0.9075);transform-origin:100% 0;">4 772 K</div>
<div class="t" style="right:353px;top:-1.5px;font-size:12px;line-height:16px;color:#000;transform:scaleX(0.8891666666666667);transform-origin:100% 0;">2744</div>
<div class="t" style="left:448px;top:-1.5px;font-size:12px;line-height:16px;color:#000;transform:scaleX(0.8937499999999999);transform-origin:0 0;">DataCardMonitor MFC Applic...</div>
<div class="t" style="left:598px;top:-1.5px;font-size:12px;line-height:16px;color:#000;transform:scaleX(0.8708333333333332);transform-origin:0 0;">Huawei Technologies Co...</div>
</div>
<div style="left:205px;top:72px;width:1px;height:470px;background:#6a6a6a;"></div>
<div style="left:5px;top:543px;width:784px;height:23px;background:#f0f0f0;"></div>
<div style="left:115px;top:545px;width:1px;height:19px;background:#d5d5d5;"></div>
<div style="left:253px;top:545px;width:1px;height:19px;background:#d5d5d5;"></div>
<div style="left:332px;top:545px;width:1px;height:19px;background:#d5d5d5;"></div>
<div style="left:464px;top:545px;width:1px;height:19px;background:#d5d5d5;"></div>
<div class="t" style="left:8px;top:547px;font-size:12px;line-height:18px;color:#000;transform:scaleX(0.913);transform-origin:0 0;">CPU Usage: 9.28%</div>
<div class="t" style="left:120px;top:547px;font-size:12px;line-height:18px;color:#000;transform:scaleX(0.978);transform-origin:0 0;">Commit Charge: 41.57%</div>
<div class="t" style="left:259px;top:547px;font-size:12px;line-height:18px;color:#000;transform:scaleX(0.903);transform-origin:0 0;">Processes: 81</div>
<div class="t" style="left:337px;top:547px;font-size:12px;line-height:18px;color:#000;transform:scaleX(0.935);transform-origin:0 0;">Physical Usage: 48.71%</div>
<div style="left:785px;top:556px;width:2px;height:2px;background:#b5b5b5;"></div>
<div style="left:782px;top:559px;width:2px;height:2px;background:#b5b5b5;"></div>
<div style="left:785px;top:559px;width:2px;height:2px;background:#b5b5b5;"></div>
<div style="left:779px;top:562px;width:2px;height:2px;background:#b5b5b5;"></div>
<div style="left:782px;top:562px;width:2px;height:2px;background:#b5b5b5;"></div>
<div style="left:785px;top:562px;width:2px;height:2px;background:#b5b5b5;"></div>
<div style="left:130px;top:216px;width:329px;height:147px;background:#ffffff;box-sizing:border-box;border:1px solid #767676;box-shadow:3px 3px 3px rgba(0,0,0,0.45)"></div>
<div class="t" style="left:136px;top:219px;font-size:11.5px;line-height:13px;color:#4d4d4d;transform:scaleX(0.8991304347826087);transform-origin:0 0;">Command Line:</div>
<div class="t" style="left:145px;top:232px;font-size:11.5px;line-height:13px;color:#4d4d4d;transform:scaleX(0.9565217391304348);transform-origin:0 0;">C:\windows\system32\svchost.exe -k DcomLaunch</div>
<div class="t" style="left:136px;top:245px;font-size:11.5px;line-height:13px;color:#4d4d4d;transform:scaleX(0.9278260869565217);transform-origin:0 0;">Path:</div>
<div class="t" style="left:145px;top:258px;font-size:11.5px;line-height:13px;color:#4d4d4d;transform:scaleX(0.9565217391304348);transform-origin:0 0;">C:\Windows\System32\svchost.exe (DcomLaunch)</div>
<div class="t" style="left:136px;top:271px;font-size:11.5px;line-height:13px;color:#4d4d4d;transform:scaleX(0.9278260869565217);transform-origin:0 0;">Services:</div>
<div class="t" style="left:145px;top:284px;font-size:11.5px;line-height:13px;color:#4d4d4d;transform:scaleX(0.9450434782608695);transform-origin:0 0;">Брокер системных событий [SystemEventsBroker]</div>
<div class="t" style="left:145px;top:297px;font-size:11.5px;line-height:13px;color:#4d4d4d;transform:scaleX(0.9622608695652175);transform-origin:0 0;">Диспетчер локальных сеансов [LSM]</div>
<div class="t" style="left:145px;top:310px;font-size:11.5px;line-height:13px;color:#4d4d4d;transform:scaleX(0.9517391304347826);transform-origin:0 0;">Модуль запуска процессов DCOM-сервера [DcomLaunch]</div>
<div class="t" style="left:145px;top:323px;font-size:11.5px;line-height:13px;color:#4d4d4d;transform:scaleX(0.9383478260869565);transform-origin:0 0;">Питание [Power]</div>
<div class="t" style="left:145px;top:336px;font-size:11.5px;line-height:13px;color:#4d4d4d;transform:scaleX(0.9287826086956521);transform-origin:0 0;">Служба инфраструктуры фоновых задач [BrokerInfrastructure]</div>
<div class="t" style="left:145px;top:349px;font-size:11.5px;line-height:13px;color:#4d4d4d;transform:scaleX(0.9144347826086957);transform-origin:0 0;">Plug and Play [PlugPlay]</div></body></html>
